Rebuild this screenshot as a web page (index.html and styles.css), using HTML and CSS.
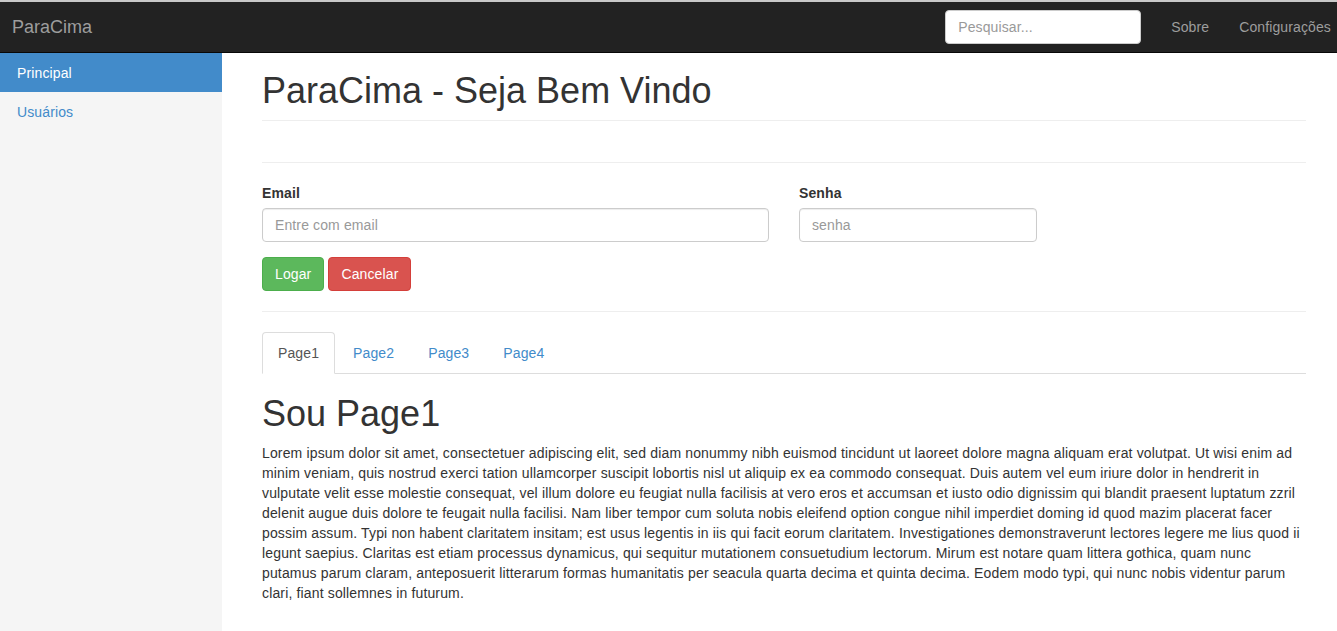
FILE: index.html
```html
<!DOCTYPE html>
<html lang="pt">
<head>
<meta charset="utf-8">
<title>ParaCima</title>
<link rel="stylesheet" href="styles.css">
</head>
<body>
<div class="topline"></div>
<nav class="navbar">
  <a class="brand" href="#">ParaCima</a>
  <div class="navbar-right">
    <form class="navbar-form">
      <input class="search" type="text" placeholder="Pesquisar...">
    </form>
    <ul class="navlinks">
      <li><a href="#">Sobre</a></li>
      <li><a href="#">Configurações</a></li>
    </ul>
  </div>
</nav>
<div class="layout">
  <aside class="sidebar">
    <ul class="side-nav">
      <li class="active"><a href="#">Principal</a></li>
      <li><a href="#">Usuários</a></li>
    </ul>
  </aside>
  <main class="main">
    <div class="page-header">
      <h1>ParaCima - Seja Bem Vindo</h1>
    </div>
    <hr class="rule rule-first">
    <form class="login">
      <div class="row">
        <div class="form-group col-email">
          <label>Email</label>
          <input class="form-control" type="text" placeholder="Entre com email">
        </div>
        <div class="form-group col-senha">
          <label>Senha</label>
          <input class="form-control" type="password" placeholder="senha">
        </div>
      </div>
      <div class="buttons">
        <button type="button" class="btn btn-success">Logar</button>
        <button type="button" class="btn btn-danger">Cancelar</button>
      </div>
    </form>
    <hr class="rule">
    <ul class="tabs">
      <li class="active"><a href="#">Page1</a></li>
      <li><a href="#">Page2</a></li>
      <li><a href="#">Page3</a></li>
      <li><a href="#">Page4</a></li>
    </ul>
    <div class="tab-content">
      <h1>Sou Page1</h1>
      <p>Lorem ipsum dolor sit amet, consectetuer adipiscing elit, sed diam nonummy nibh euismod tincidunt ut laoreet dolore magna aliquam erat volutpat. Ut wisi enim ad minim veniam, quis nostrud exerci tation ullamcorper suscipit lobortis nisl ut aliquip ex ea commodo consequat. Duis autem vel eum iriure dolor in hendrerit in vulputate velit esse molestie consequat, vel illum dolore eu feugiat nulla facilisis at vero eros et accumsan et iusto odio dignissim qui blandit praesent luptatum zzril delenit augue duis dolore te feugait nulla facilisi. Nam liber tempor cum soluta nobis eleifend option congue nihil imperdiet doming id quod mazim placerat facer possim assum. Typi non habent claritatem insitam; est usus legentis in iis qui facit eorum claritatem. Investigationes demonstraverunt lectores legere me lius quod ii legunt saepius. Claritas est etiam processus dynamicus, qui sequitur mutationem consuetudium lectorum. Mirum est notare quam littera gothica, quam nunc putamus parum claram, anteposuerit litterarum formas humanitatis per seacula quarta decima et quinta decima. Eodem modo typi, qui nunc nobis videntur parum clari, fiant sollemnes in futurum.</p>
    </div>
  </main>
</div>
</body>
</html>
```
FILE: styles.css
```css
* { box-sizing: border-box; }
html, body { margin: 0; padding: 0; }
body {
  font-family: "Liberation Sans", Arial, Helvetica, sans-serif;
  font-size: 14px;
  line-height: 20px;
  letter-spacing: 0.12px;
  color: #333;
  background: #fff;
  overflow: hidden;
  height: 631px;
}
a { text-decoration: none; }
ul { list-style: none; margin: 0; padding: 0; }

.topline { height: 2px; background: #c9c9c9; }

.navbar {
  height: 51px;
  background: #222;
  border-bottom: 1px solid #080808;
  display: flex;
  align-items: center;
  justify-content: space-between;
}
.brand {
  color: #9d9d9d;
  font-size: 18px;
  line-height: 20px;
  letter-spacing: 0;
  padding: 15px 12px;
}
.navbar-right {
  display: flex;
  align-items: center;
  margin-right: -9px;
}
.navbar-form { margin: 0 15px 0 0; }
.search {
  display: block;
  width: 196px;
  height: 34px;
  padding: 6px 12px;
  font: inherit;
  font-size: 14px;
  letter-spacing: inherit;
  color: #555;
  background: #fff;
  border: 1px solid #ccc;
  border-radius: 4px;
}
.search::placeholder { color: #999; }
.navlinks { display: flex; }
.navlinks a {
  display: block;
  color: #9d9d9d;
  padding: 15px 15px;
  line-height: 20px;
}

.layout { display: flex; height: 578px; }
.sidebar {
  width: 222px;
  flex: 0 0 222px;
  background: #f5f5f5;
}
.side-nav a {
  display: block;
  padding: 9.5px 17px;
  color: #428bca;
  line-height: 20px;
}
.side-nav li.active a { background: #428bca; color: #fff; }

.main {
  flex: 1;
  padding: 18px 31px 0 40px;
  min-width: 0;
}
h1 {
  font-size: 36px;
  font-weight: 500;
  line-height: 1.1;
  letter-spacing: 0;
  margin: 0;
  color: #333;
}
.page-header {
  padding-bottom: 9px;
  border-bottom: 1px solid #eee;
}
.rule {
  border: 0;
  border-top: 1px solid #eee;
  margin: 20px 0;
  height: 0;
}
.rule-first { margin-top: 41px; }

.row { display: flex; gap: 30px; }
.form-group { margin-bottom: 15px; }
.col-email { width: 507px; }
.col-senha { width: 238px; }
label {
  display: block;
  font-weight: bold;
  margin-bottom: 5px;
}
.form-control {
  display: block;
  width: 100%;
  height: 34px;
  padding: 6px 12px;
  font: inherit;
  letter-spacing: inherit;
  color: #555;
  background: #fff;
  border: 1px solid #ccc;
  border-radius: 4px;
  box-shadow: inset 0 1px 1px rgba(0,0,0,.075);
}
.form-control::placeholder { color: #999; }

.buttons { display: flex; gap: 4px; }
.btn {
  font: inherit;
  font-size: 14px;
  letter-spacing: inherit;
  line-height: 20px;
  padding: 6px 12px;
  border: 1px solid transparent;
  border-radius: 4px;
  color: #fff;
  cursor: pointer;
}
.btn-success { background: #5cb85c; border-color: #4cae4c; }
.btn-danger { background: #d9534f; border-color: #d43f3a; }

.tabs {
  display: flex;
  border-bottom: 1px solid #ddd;
}
.tabs li { margin-right: 2px; margin-bottom: -1px; }
.tabs a {
  display: block;
  padding: 10px 15px;
  line-height: 20px;
  border: 1px solid transparent;
  border-radius: 4px 4px 0 0;
  color: #428bca;
}
.tabs li.active a {
  color: #555;
  background: #fff;
  border-color: #ddd #ddd transparent;
}
.tab-content h1 { margin: 20px 0 10px; }
.tab-content p { margin: 0 0 10px; letter-spacing: 0.15px; }
```
